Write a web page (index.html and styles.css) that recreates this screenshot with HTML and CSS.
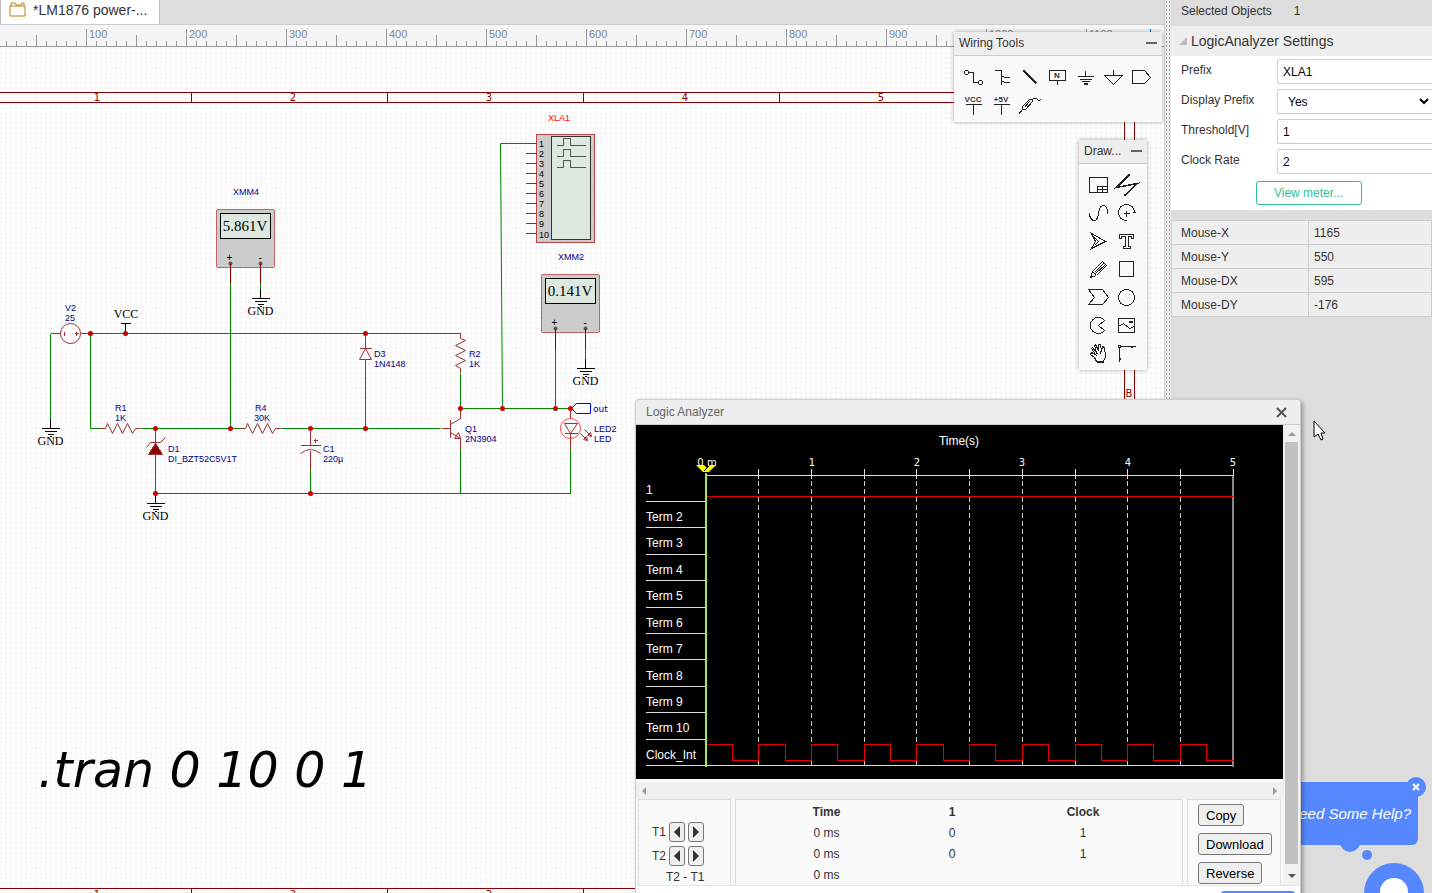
FILE: index.html
```html
<!DOCTYPE html>
<html lang="en">
<head>
  <meta charset="UTF-8" />
  <meta name="viewport" content="width=device-width, initial-scale=1.0"/>
  <title>LM1876 power</title>
  <link rel="stylesheet" href="styles.css">
</head>
<body>

  <div class="app">
    <main class="editor">
      <!-- Document tabs -->
      <nav class="tabs">
        <a href="#" class="tab">
          <svg class="tab-icon" width="18" height="16" viewBox="0 0 18 16"><path d="M1 4V14H16V4H1M2 4V1H6L7 3H12L13 1H15V4"/></svg>
          <span>*LM1876 power-...</span>
        </a>
      </nav>

      <!-- Ruler -->
      <svg class="ruler" width="100%" height="22">
        <defs>
          <pattern id="ticks" x="86" width="100" height="22" patternUnits="userSpaceOnUse">
            <path d="M0 4h1v18h-1zM50 10h1v12h-1zM10 16h1v6h-1zM20 16h1v6h-1zM30 16h1v6h-1zM40 16h1v6h-1zM60 16h1v6h-1zM70 16h1v6h-1zM80 16h1v6h-1zM90 16h1v6h-1z" fill="#999"/>
          </pattern>
        </defs>
        <rect width="100%" height="22" fill="url(#ticks)"/>
        <rect y="21" width="100%" height="1" fill="#999"/>
        <rect x="1150" y="4" width="1" height="18" fill="#06c"/>
        <g class="ruler-text">
          <text x="89" y="13">100</text><text x="189" y="13">200</text><text x="289" y="13">300</text>
          <text x="389" y="13">400</text><text x="489" y="13">500</text><text x="589" y="13">600</text>
          <text x="689" y="13">700</text><text x="789" y="13">800</text><text x="889" y="13">900</text>
          <text x="989" y="13">1000</text><text x="1089" y="13">1100</text>
        </g>
      </svg>

      <!-- Schematic -->
      <div class="sheet">
        <svg class="schematic" width="1164" height="846" viewBox="0 47 1164 846">
          <defs>
            <g id="gnd" class="black">
              <path d="M0 0V10M-9 10H9M-6 13H6M-3 16H3M-1 18H1"/>
              <text x="0" y="26" class="net">GND</text>
            </g>
            <g id="meter">
              <rect x="0" y="0" width="58" height="58" rx="2" fill="#ccc" stroke="#b66"/>
              <rect x="4" y="4" width="50" height="25" fill="#dde8df" stroke="#000"/>
              <circle class="smooth" cx="14" cy="54" r="2" fill="#555"/>
              <circle class="smooth" cx="44" cy="54" r="2" fill="#555"/>
              <path d="M14 54V74M44 54V74" stroke="#880000"/>
              <text x="10" y="51" class="pin">+</text>
              <text x="42" y="51" class="pin">-</text>
            </g>
            <path id="res" d="M0 0H5l2-5l5 10l5-10l5 10l5-10l5 10l3-5H40"/>
          </defs>

          <g class="lines">
            <!-- sheet frame -->
            <path class="frame" d="M-1 92H1134V900M-1 102H1124V900M191 92V102M387 92V102M583 92V102M779 92V102M975 92V102M-1 888H640M191 888V898M387 888V898M583 888V898"/>

            <path class="wire" d="M50 333V418M90 333H460M90 333V428H100M140 428H240M280 428H440M230 283V428M155 468V493H570V448M310 468V493M365 373V428M460 373V408H570M460 448V493M555 348V408M525 143H500M260 283V289M585 348V359"/>
            <path class="wire smooth" d="M500 143L502 408"/>

            <use href="#gnd" x="50" y="418"/>
            <use href="#gnd" x="260" y="288"/>
            <use href="#gnd" x="155" y="493"/>
            <use href="#gnd" x="585" y="358"/>
            <path class="black" d="M125 333V323M120 323H130"/>
            <use href="#meter" x="216" y="209"/>
            <use href="#meter" x="541" y="274"/>

            <g class="part">
              <circle class="smooth" cx="70" cy="333" r="10"/>
              <path d="M50 333H60M80 333H90M64 331V335M74 333H78M76 331V335"/>
              <use href="#res" class="smooth" x="100" y="428"/>
              <use href="#res" class="smooth" x="240" y="428"/>
              <use href="#res" class="smooth" transform="translate(460 333) rotate(90)"/>
              <!-- D1 -->
              <path d="M155 428V442M155 454V468"/>
              <path class="smooth" d="M146 447L150 442H160L165 437"/>
              <path d="M155 443L148 454H162Z" fill="#880000"/>
              <!-- C1 -->
              <path d="M310 428V445M300 445H320M310 450V468M313 440H317M315 438V442"/>
              <path class="smooth" d="M300 453Q310 445 320 453"/>
              <!-- D3 -->
              <path d="M365 333V348M359 348H371M365 359V373"/>
              <path class="smooth" d="M365 348L359 359H371Z"/>
              <!-- Q1 -->
              <path d="M441 428H450M450 419V437M460 408V418M460 438V448"/>
              <path class="smooth" d="M460 418L450 424M450 432L460 438M454 438L460 438L458 432Z"/>
              <!-- LED2 -->
              <path d="M570 408V418M564 433H577M570 433V448"/>
              <path class="smooth" d="M564 423H577L570 433ZM584 429L591 436M591 436L587 435L590 432ZM580 433L587 440M587 440L583 439L586 436Z"/>
            </g>
            <circle class="led" cx="570" cy="428" r="10"/>
            <path class="flag" d="M571 408L576 403H590V413H576Z"/>

            <!-- XLA1 -->
            <rect x="536" y="134" width="58" height="108" fill="#ccc" stroke="#b44"/>
            <rect x="551" y="136" width="39" height="103" fill="#dde8df" stroke="#333"/>
            <path class="xpins" d="M525 143H536M525 153H536M525 163H536M525 173H536M525 183H536M525 193H536M525 203H536M525 213H536M525 223H536M525 233H536"/>
            <path class="pulse" d="M556 145H563V138H570V145H585M556 156H563V149H570V156H585M556 167H563V160H570V167H585"/>

            <g class="dots">
              <circle cx="90" cy="333" r="2.5"/><circle cx="125" cy="333" r="2.5"/><circle cx="365" cy="333" r="2.5"/>
              <circle cx="155" cy="428" r="2.5"/><circle cx="230" cy="428" r="2.5"/><circle cx="310" cy="428" r="2.5"/>
              <circle cx="365" cy="428" r="2.5"/><circle cx="155" cy="493" r="2.5"/><circle cx="310" cy="493" r="2.5"/>
              <circle cx="460" cy="408" r="2.5"/><circle cx="502" cy="408" r="2.5"/><circle cx="555" cy="408" r="2.5"/>
              <circle cx="570" cy="408" r="2.5"/>
            </g>
          </g>

          <g class="frame-text">
            <text x="97" y="101">1</text><text x="293" y="101">2</text><text x="489" y="101">3</text>
            <text x="685" y="101">4</text><text x="881" y="101">5</text><text x="1129" y="397">B</text>
            <text x="97" y="898">1</text><text x="293" y="898">2</text><text x="489" y="898">3</text>
          </g>

          <g class="labels">
            <text x="65" y="311">V2</text><text x="65" y="321">25</text>
            <text x="115" y="411">R1</text><text x="115" y="421">1K</text>
            <text x="255" y="411">R4</text><text x="254" y="421">30K</text>
            <text x="168" y="452">D1</text><text x="168" y="462">DI_BZT52C5V1T</text>
            <text x="323" y="452">C1</text><text x="323" y="462">220µ</text>
            <text x="374" y="357">D3</text><text x="374" y="367">1N4148</text>
            <text x="469" y="357">R2</text><text x="469" y="367">1K</text>
            <text x="465" y="432">Q1</text><text x="465" y="442">2N3904</text>
            <text x="594" y="432">LED2</text><text x="594" y="442">LED</text>
            <text x="233" y="195">XMM4</text><text x="558" y="260">XMM2</text>
            <text x="548" y="121" class="selected">XLA1</text>
          </g>
          <g class="numbers">
            <text x="539" y="147">1</text><text x="539" y="157">2</text><text x="539" y="167">3</text>
            <text x="539" y="177">4</text><text x="539" y="187">5</text><text x="539" y="197">6</text>
            <text x="539" y="207">7</text><text x="539" y="217">8</text><text x="539" y="227">9</text>
            <text x="539" y="238">10</text>
          </g>
          <text x="126" y="318" class="net">VCC</text>
          <text x="593" y="412" class="port">out</text>
          <text x="245" y="231" class="reading">5.861V</text>
          <text x="570" y="296" class="reading">0.141V</text>
          <text x="38" y="787" class="spice">.tran 0 10 0 1</text>
        </svg>
      </div>
    </main>

    <div class="splitter"></div>

    <!-- Properties -->
    <aside class="props">
      <div class="selected-row"><span>Selected Objects</span><span>1</span></div>
      <h2 class="section-title"><svg width="8" height="8"><path d="M8 0V8H0Z" fill="#bbb"/></svg>LogicAnalyzer Settings</h2>
      <form class="settings">
        <div class="field"><label for="prefix">Prefix</label><input id="prefix" type="text" value="XLA1"></div>
        <div class="field"><label for="display">Display Prefix</label>
          <div class="select-box">
            <select id="display"><option>Yes</option><option>No</option></select>
            <svg width="10" height="7" viewBox="0 0 10 7"><path d="M1 1L5 5L9 1" fill="none" stroke="#000" stroke-width="2"/></svg>
          </div>
        </div>
        <div class="field"><label for="threshold">Threshold[V]</label><input id="threshold" type="text" value="1"></div>
        <div class="field"><label for="rate">Clock Rate</label><input id="rate" type="text" value="2"></div>
        <button type="button" class="view-meter">View meter...</button>
      </form>
      <table class="mouse">
        <tr><th>Mouse-X</th><td>1165</td></tr>
        <tr><th>Mouse-Y</th><td>550</td></tr>
        <tr><th>Mouse-DX</th><td>595</td></tr>
        <tr><th>Mouse-DY</th><td>-176</td></tr>
      </table>
    </aside>
  </div>

  <!-- Floating tool palettes -->
  <section class="palette wiring">
    <header class="palette-head"><span>Wiring Tools</span><button class="minimize" aria-label="Minimize"></button></header>
    <div class="tools">
      <button class="tool" aria-label="Wire"><svg viewBox="0 0 28 28"><circle cx="7" cy="9" r="2"/><path d="M9 9H14V19H19"/><circle cx="21" cy="19" r="2"/></svg></button>
      <button class="tool" aria-label="Bus"><svg viewBox="0 0 28 28"><path d="M7 7H14V21M14 12L17 14H22M14 17L17 19H22"/></svg></button>
      <button class="tool" aria-label="Bus entry"><svg viewBox="0 0 28 28"><path class="bold" d="M8 7L21 20"/></svg></button>
      <button class="tool" aria-label="Net label"><svg viewBox="0 0 28 28"><path d="M6 7H22V17H6ZM14 17V21"/><text x="14" y="15">N</text></svg></button>
      <button class="tool" aria-label="Ground"><svg viewBox="0 0 28 28"><path d="M14 7V13M6 13H22M8 16H20M10 18H18M12 20H16M12 21H16"/></svg></button>
      <button class="tool" aria-label="Analog ground"><svg viewBox="0 0 28 28"><path d="M14 6V12M5 12H23L14 21Z"/></svg></button>
      <button class="tool" aria-label="Net port"><svg viewBox="0 0 28 28"><path d="M5 7H17L23 14L17 20H5Z"/></svg></button>
      <button class="tool" aria-label="VCC"><svg viewBox="0 0 28 28"><text x="14" y="11">VCC</text><path d="M6 13H22M14 13V23"/></svg></button>
      <button class="tool" aria-label="+5V"><svg viewBox="0 0 28 28"><text x="14" y="11">+5V</text><path d="M6 13H22M14 13V23"/></svg></button>
      <button class="tool" aria-label="Probe"><svg viewBox="0 0 28 28"><path d="M3 23L7 18V15L14 8H17V10L10 18H7M9 16L14 10M16 8Q20 6 22 8L23 9L26 8"/></svg></button>
    </div>
  </section>

  <section class="palette drawing">
    <header class="palette-head"><span>Draw...</span><button class="minimize" aria-label="Minimize"></button></header>
    <div class="tools">
      <button class="tool" aria-label="Frame"><svg viewBox="0 0 28 28"><path d="M5 6H23V21H5ZM13 21V15H23M13 18H23M18 15V21"/></svg></button>
      <button class="tool" aria-label="Line"><svg viewBox="0 0 28 28"><path class="bold" d="M17 3L4 16L25 12L12 24"/></svg></button>
      <button class="tool" aria-label="Bezier"><svg viewBox="0 0 28 28"><path d="M5 13C5 19 7 21 10 21C16 21 12 6 19 6C22 6 23 10 23 14"/></svg></button>
      <button class="tool" aria-label="Arc"><svg viewBox="0 0 28 28"><path d="M22 13A8 8 0 1 0 14 21M20 13H23M11 14H17M14 11V17"/></svg></button>
      <button class="tool" aria-label="Arrow"><svg viewBox="0 0 28 28"><path d="M7 6L21 14L7 21L11 14ZM9 9L14 14L10 18"/></svg></button>
      <button class="tool" aria-label="Text"><svg viewBox="0 0 28 28"><path d="M7 7H21V11H19V9H16V19H18V21H11V19H13V9H9V11H7Z"/></svg></button>
      <button class="tool" aria-label="Pencil"><svg viewBox="0 0 28 28"><path d="M6 22L8 16L18 6L22 10L12 20ZM8 16L12 20M10 17L19 8M11 18L21 9M6 21L8 21"/></svg></button>
      <button class="tool" aria-label="Rectangle"><svg viewBox="0 0 28 28"><path d="M7 6H21V21H7Z"/></svg></button>
      <button class="tool" aria-label="Polygon"><svg viewBox="0 0 28 28"><path d="M4 6H18L24 14L18 21H4L10 14Z"/></svg></button>
      <button class="tool" aria-label="Ellipse"><svg viewBox="0 0 28 28"><circle cx="14" cy="14" r="8"/></svg></button>
      <button class="tool" aria-label="Pie"><svg viewBox="0 0 28 28"><path d="M20 9A8 8 0 1 0 20 19L14 14Z"/></svg></button>
      <button class="tool" aria-label="Image"><svg viewBox="0 0 28 28"><path d="M6 7H22V21H6ZM6 15L11 12L17 17L22 15M17 10H20V11H17Z"/></svg></button>
      <button class="tool" aria-label="Drag"><svg viewBox="0 0 28 28"><path d="M12 22L10 18L6 15L7 13L11 15L7 9L8 8L12 13L10 6L11 5L14 11L14 5L16 5L17 12L18 7L20 8L21 17L19 22ZM12 23H19M12 13L13 15M16 11V14"/></svg></button>
      <button class="tool" aria-label="Origin"><svg viewBox="0 0 28 28"><path d="M7 7H23M7 7V22M20 6V8M6 19H8M6 6H8V8H6ZM19 6V8M6 20H8"/></svg></button>
    </div>
  </section>

  <!-- Help bubble -->
  <div class="help">
    <div class="bubble">Need Some Help?</div>
    <button class="help-close" aria-label="Close help"><svg width="8" height="8"><path d="M1 1L7 7M7 1L1 7" stroke="#fff" stroke-width="2"/></svg></button>
    <svg class="help-tail" width="98" height="52"><g fill="#5588ff"><circle cx="16" cy="1" r="10"/><circle cx="33" cy="14" r="5"/><circle cx="60" cy="52" r="30"/></g><circle cx="60" cy="51" r="14" fill="#fff"/></svg>
  </div>

  <!-- Logic analyzer window -->
  <section class="dialog">
    <header class="dialog-head">
      <span>Logic Analyzer</span>
      <button class="close" aria-label="Close"><svg width="11" height="11"><path d="M1 1L10 10M10 1L1 10" stroke="#555" stroke-width="2"/></svg></button>
    </header>
    <div class="dialog-body">
      <div class="pane">
        <svg class="chart" width="647" height="354" viewBox="636 425 647 354">
          <g class="chart-text">
            <text x="959" y="445" class="mid">Time(s)</text>
            <text x="646" y="494">1</text>
            <text x="646" y="521">Term 2</text>
            <text x="646" y="547">Term 3</text>
            <text x="646" y="574">Term 4</text>
            <text x="646" y="600">Term 5</text>
            <text x="646" y="627">Term 6</text>
            <text x="646" y="653">Term 7</text>
            <text x="646" y="680">Term 8</text>
            <text x="646" y="706">Term 9</text>
            <text x="646" y="732">Term 10</text>
            <text x="646" y="759">Clock_Int</text>
          </g>
          <g class="axis-text">
            <text x="707" y="466">0 m</text><text x="812" y="466">1</text><text x="917" y="466">2</text>
            <text x="1022" y="466">3</text><text x="1128" y="466">4</text><text x="1233" y="466">5</text>
          </g>
          <g class="lines">
            <path class="grid-rows" d="M645 501H706M645 527H706M645 554H706M645 580H706M645 607H706M645 633H706M645 659H706M645 686H706M645 712H706M645 739H706M645 765H1233M706 475H1233"/>
            <path class="grid-rows" d="M758 468V478M811 468V478M864 468V478M916 468V478M969 468V478M1022 468V478M1075 468V478M1127 468V478M1180 468V478M1233 468V478"/>
            <path class="dashed" d="M758 480V766M811 480V766M864 480V766M916 480V766M969 480V766M1022 480V766M1075 480V766M1127 480V766M1180 480V766"/>
            <path d="M1232 475V766" stroke="#888" stroke-width="2"/>
            <path class="signal" d="M706 496H1233M706 744H732V760H758V744H785V760H811V744H837V760H864V744H890V760H916V744H943V760H969V744H995V760H1022V744H1048V760H1075V744H1101V760H1127V744H1153V760H1180V744H1206V760H1233"/>
          </g>
          <path d="M696 465H704L707 468L710 465H716L709 472H703Z" fill="#ff0"/>
          <path d="M704 471L709 466" stroke="#000"/>
          <path d="M706 473V767" stroke="#a6e35a" stroke-width="2"/>
        </svg>
        <div class="hscroll"><i class="arrow-left"></i><i class="arrow-right"></i></div>
        <div class="panels">
          <div class="panel cursors">
            <div class="cursor-row"><span>T1</span><button aria-label="T1 left"><i class="left"></i></button><button aria-label="T1 right"><i class="right"></i></button></div>
            <div class="cursor-row"><span>T2</span><button aria-label="T2 left"><i class="left"></i></button><button aria-label="T2 right"><i class="right"></i></button></div>
            <div class="diff">T2 - T1</div>
          </div>
          <div class="panel values">
            <table>
              <tr><th>Time</th><th>1</th><th>Clock</th></tr>
              <tr><td>0 ms</td><td>0</td><td>1</td></tr>
              <tr><td>0 ms</td><td>0</td><td>1</td></tr>
              <tr><td>0 ms</td><td></td><td></td></tr>
            </table>
          </div>
          <div class="panel actions">
            <button>Copy</button>
            <button>Download</button>
            <button>Reverse</button>
          </div>
        </div>
      </div>
      <div class="vscroll"><i class="arrow-up"></i><div class="thumb"></div><i class="arrow-down"></i></div>
    </div>
    <footer class="dialog-foot"><button class="primary" aria-label="OK"></button></footer>
  </section>

  <svg class="pointer" width="14" height="21"><path d="M1 1V17L5 14L8 20L10 19L8 13H12Z" fill="#fff" stroke="#000"/></svg>
</body>
</html>
```
FILE: styles.css
```css
* { margin: 0; padding: 0; box-sizing: border-box; }

body {
  font-family: "Liberation Sans", Arial, sans-serif;
  font-size: 12px;
  color: #333;
  height: 100vh;
  overflow: hidden;
  position: relative;
}

button, input, select { font-family: inherit; }

.app {
  display: flex;
  height: 100vh;
}

.editor {
  flex: 1;
  min-width: 0;
  display: flex;
  flex-direction: column;
}

.tabs {
  display: flex;
  height: 25px;
  background: #ddd;
  border-bottom: 1px solid #ccc;
}

.tab {
  display: flex;
  align-items: center;
  gap: 6px;
  padding: 0 12px 4px 8px;
  background: #fff;
  border-left: 1px solid #bbb;
  border-right: 1px solid #bbb;
  color: #333;
  font-size: 14px;
  text-decoration: none;
  white-space: nowrap;
}

.tab-icon { fill: none; stroke: #b8860b; }

.ruler {
  display: block;
  flex: none;
  background: #f5f5f5;
}

.ruler-text { font-size: 11px; fill: #778899; }

.sheet {
  flex: 1;
  overflow: hidden;
  background-color: #fff;
  background-image:
    linear-gradient(rgba(0, 0, 0, 0.02) 2px, transparent 2px),
    linear-gradient(90deg, rgba(0, 0, 0, 0.02) 2px, transparent 2px);
  background-size: 5px 5px;
}

.schematic { display: block; }

.lines {
  transform: translate(0.5px, 0.5px);
  fill: none;
  shape-rendering: crispEdges;
}

.smooth { shape-rendering: auto; }
.frame { stroke: #880000; }
.wire { stroke: #008800; }
.black { stroke: #000; }
.part { stroke: #a03030; }
.led { stroke: #ff4444; shape-rendering: auto; }
.flag { stroke: #0000ff; shape-rendering: auto; }
.xpins { stroke: #ff0000; }
.pulse { stroke: #555; }
.dots { fill: #cc0000; shape-rendering: auto; }

.frame-text {
  font-family: "DejaVu Sans", Verdana, sans-serif;
  font-size: 10px;
  fill: #880000;
  text-anchor: middle;
}

.labels { font-size: 9px; fill: #000088; }
.labels .selected { fill: #ff0000; }
.numbers { font-size: 9px; fill: #000; }

.net {
  font-family: "Liberation Serif", "Times New Roman", serif;
  font-size: 12px;
  fill: #000;
  stroke: none;
  text-anchor: middle;
}

.pin { font-size: 10px; fill: #000; stroke: none; }
.port { font-family: "DejaVu Sans", Verdana, sans-serif; font-size: 9px; fill: #0000aa; }

.reading {
  font-family: "Liberation Serif", "Times New Roman", serif;
  font-size: 15px;
  fill: #000;
  text-anchor: middle;
}

.spice {
  font-family: "DejaVu Sans", Verdana, sans-serif;
  font-size: 49px;
  font-style: italic;
  fill: #000;
}

.splitter {
  width: 7px;
  border-left: 1px solid #ccc;
  background-color: #eee;
  background-image: radial-gradient(#aaa 1px, transparent 1px);
  background-size: 3px 4px;
}

/* properties panel */
.props {
  width: 261px;
  background: #ddd;
  overflow: hidden;
}

.selected-row {
  display: flex;
  gap: 22px;
  padding: 4px 10px 0;
  height: 26px;
}

.section-title {
  display: flex;
  align-items: center;
  gap: 4px;
  height: 30px;
  padding-left: 8px;
  background: #eee;
  font-size: 14px;
  font-weight: normal;
}

.settings {
  display: flex;
  flex-direction: column;
  height: 154px;
  padding-top: 3px;
  background: #fff;
}

.field {
  display: flex;
  height: 30px;
  padding-left: 10px;
}

.field label { width: 96px; flex: none; padding-top: 4px; }

.field input, .field select {
  width: 170px;
  height: 25px;
  padding: 0 5px;
  border: 1px solid #ccc;
  border-radius: 2px;
  background: #fff;
  color: #000;
  font-size: 12px;
}

.field select { appearance: none; padding-left: 10px; }

.select-box { position: relative; }
.select-box svg { position: absolute; left: 142px; top: 9px; }

.view-meter {
  align-self: center;
  width: 106px;
  height: 24px;
  margin: 2px 0 0 14px;
  border: 1px solid #2ebd97;
  border-radius: 3px;
  background: #fff;
  color: #2ebd97;
  font-size: 12px;
}

.mouse {
  width: 100%;
  margin-top: 10px;
  border-collapse: collapse;
  background: #eee;
}

.mouse th, .mouse td {
  height: 24px;
  padding-left: 9px;
  border: 1px solid #ccc;
  font-weight: normal;
  text-align: left;
}

.mouse th { width: 137px; }
.mouse td { padding-left: 5px; }

/* palettes */
.palette {
  position: absolute;
  background: #fafafa;
  box-shadow: 0 0 4px rgba(0, 0, 0, 0.35);
}

.wiring { left: 954px; top: 32px; width: 208px; }
.drawing { left: 1079px; top: 140px; width: 68px; }

.palette-head {
  display: flex;
  align-items: center;
  justify-content: space-between;
  height: 24px;
  padding: 0 5px 2px;
  background: #eee;
  border-bottom: 1px solid #ccc;
}

.minimize {
  width: 11px;
  height: 2px;
  border: none;
  background: #666;
}

.tools {
  display: grid;
  grid-template-columns: repeat(7, 28px);
  padding: 7px 5px 3px;
}

.drawing .tools { grid-template-columns: repeat(2, 28px); }

.tool {
  width: 28px;
  height: 28px;
  border: none;
  background: none;
}

.tool svg {
  display: block;
  width: 28px;
  height: 28px;
  fill: none;
  stroke: #222;
  shape-rendering: crispEdges;
}

.tool svg path, .tool svg circle { transform: translate(0.5px, 0.5px); }
.tool svg .bold { stroke-width: 1.5; }

.tool text {
  font-size: 8px;
  font-weight: bold;
  fill: #333;
  stroke: none;
  text-anchor: middle;
}

/* logic analyzer */
.dialog {
  position: absolute;
  left: 635px;
  top: 399px;
  width: 666px;
  border: 1px solid #ccc;
  border-radius: 4px 4px 0 0;
  background: #fff;
  box-shadow: 2px 2px 4px rgba(0, 0, 0, 0.35);
}

.dialog-head {
  display: flex;
  align-items: center;
  justify-content: space-between;
  height: 25px;
  padding: 0 13px 0 10px;
  border-bottom: 1px solid #ccc;
  border-radius: 4px 4px 0 0;
  background: #eee;
  color: #666;
}

.close { border: none; background: none; height: 11px; }
.close svg { display: block; }

.dialog-body {
  display: flex;
  height: 461px;
  overflow: hidden;
  background: #fafafa;
  border-bottom: 1px solid #e5e5e5;
}

.pane { flex: 1; min-width: 0; }

.chart { display: block; background: #000; }
.chart-text { font-size: 12px; fill: #fff; }
.mid { text-anchor: middle; }

.axis-text {
  font-family: "DejaVu Sans", Verdana, sans-serif;
  font-size: 10px;
  fill: #fff;
  text-anchor: middle;
}

.grid-rows { stroke: #ddd; }
.dashed { stroke: #ccc; stroke-dasharray: 5 3; }
.signal { stroke: #e60000; }

.hscroll {
  display: flex;
  justify-content: space-between;
  align-items: center;
  height: 17px;
  margin-top: 3px;
  padding: 0 6px;
  background: #f0f0f0;
}

.arrow-left, .left { border: 4px solid transparent; border-left: none; border-right: 4px solid #999; }
.arrow-right, .right { border: 4px solid transparent; border-right: none; border-left: 4px solid #999; }
.arrow-up { border: 4px solid transparent; border-top: none; border-bottom-color: #999; }
.arrow-down { border: 4px solid transparent; border-bottom: none; border-top-color: #555; }

.left, .right { border-top-width: 6px; border-bottom-width: 6px; display: block; }
.left { border-right: 6px solid #333; }
.right { border-left: 6px solid #333; }

.vscroll {
  display: flex;
  flex-direction: column;
  align-items: center;
  justify-content: space-between;
  width: 17px;
  padding: 7px 0;
  background: #f1f1f1;
}

.thumb {
  flex: 1;
  width: 13px;
  margin: 6px 0 10px;
  background: #c1c1c1;
}

.panels {
  display: flex;
  gap: 4px;
  padding: 0 2px;
  height: 100px;
}

.panel { border: 1px solid #ddd; }

.cursors { width: 93px; padding: 22px 13px 0; }
.values { flex: 1; padding: 1px 0 0 26px; }
.actions {
  display: flex;
  flex-direction: column;
  align-items: flex-start;
  gap: 7px;
  width: 94px;
  padding: 4px 10px;
}

.cursor-row {
  display: flex;
  align-items: center;
  gap: 3px;
  height: 20px;
  margin-bottom: 4px;
}

.cursor-row span { width: 14px; }

.cursor-row button {
  display: flex;
  align-items: center;
  justify-content: center;
  width: 16px;
  height: 20px;
}

.panel button {
  border: 1px solid #767676;
  border-radius: 3px;
  background: #efefef;
  color: #000;
}

.diff { padding-left: 14px; line-height: 14px; }

.values table { border-collapse: collapse; }
.values th, .values td { height: 21px; text-align: center; }
.values th:nth-child(1) { width: 129px; }
.values th:nth-child(2) { width: 122px; }
.values th:nth-child(3) { width: 140px; }

.actions button {
  height: 22px;
  padding: 0 7px;
  font-size: 13px;
}

.dialog-foot {
  display: flex;
  justify-content: flex-end;
  height: 36px;
  padding: 5px 5px 0;
}

.primary {
  width: 74px;
  height: 26px;
  border: none;
  border-radius: 3px;
  background: #5588ff;
}

/* help bubble */
.help {
  position: absolute;
  right: 0;
  bottom: 0;
  width: 160px;
  height: 111px;
}

.bubble {
  height: 63px;
  margin-right: 14px;
  padding-right: 7px;
  border-radius: 6px;
  background: #5588ff;
  color: #fff;
  font-size: 15px;
  font-style: italic;
  line-height: 63px;
  text-align: right;
  white-space: nowrap;
}

.help-close {
  position: absolute;
  top: -5px;
  right: 6px;
  display: flex;
  align-items: center;
  justify-content: center;
  width: 20px;
  height: 20px;
  border: none;
  border-radius: 50%;
  background: #5588ff;
}

.help-tail {
  position: absolute;
  right: 0;
  bottom: 0;
}

.pointer {
  position: absolute;
  left: 1313px;
  top: 420px;
}
```
